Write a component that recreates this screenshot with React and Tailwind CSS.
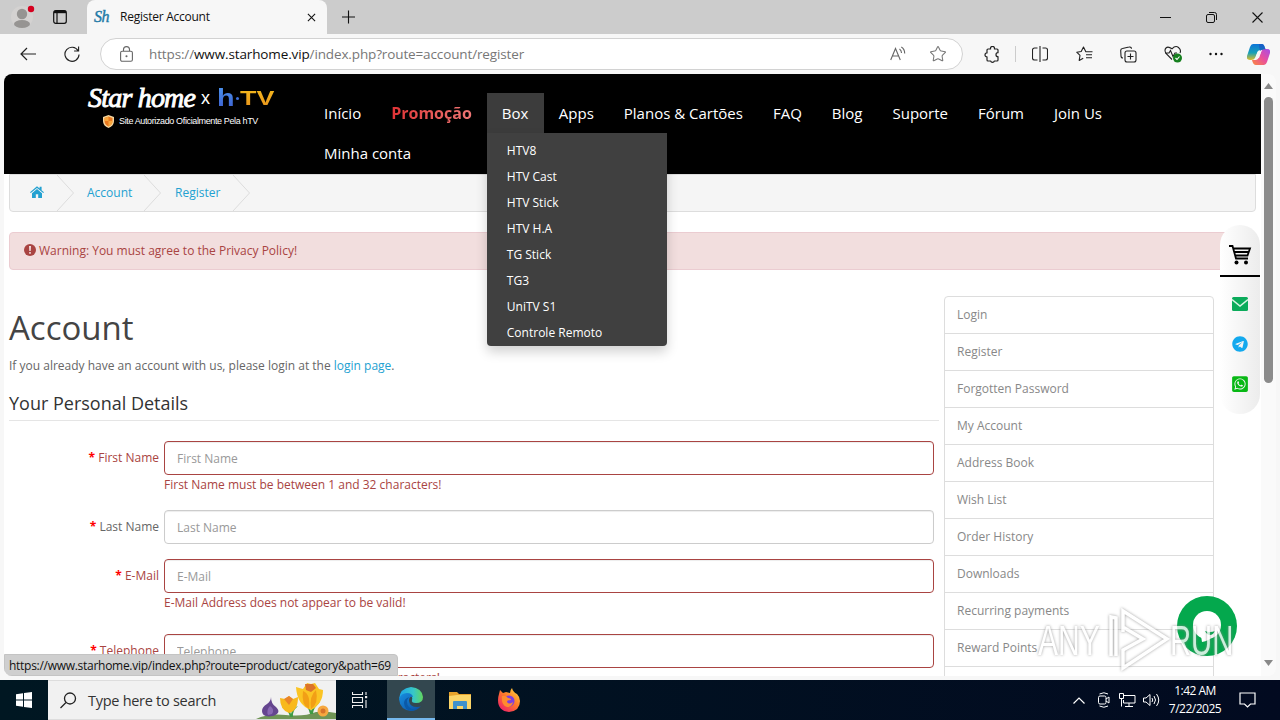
import { FaTelegram, FaWhatsappSquare } from 'react-icons/fa';
import { Star } from 'lucide-react';

const navItems = [
  { label: 'Início' },
  { label: 'Promoção', hot: true },
  { label: 'Box', open: true },
  { label: 'Apps' },
  { label: 'Planos & Cartões' },
  { label: 'FAQ' },
  { label: 'Blog' },
  { label: 'Suporte' },
  { label: 'Fórum' },
  { label: 'Join Us' },
  { label: 'Minha conta' },
];

const boxMenu = ['HTV8', 'HTV Cast', 'HTV Stick', 'HTV H.A', 'TG Stick', 'TG3', 'UniTV S1', 'Controle Remoto'];

const accountLinks = [
  'Login',
  'Register',
  'Forgotten Password',
  'My Account',
  'Address Book',
  'Wish List',
  'Order History',
  'Downloads',
  'Recurring payments',
  'Reward Points',
];

const fields = [
  { label: 'First Name', error: 'First Name must be between 1 and 32 characters!', gap: 'mb-[15px]' },
  { label: 'Last Name', gap: 'mb-[15px]' },
  { label: 'E-Mail', error: 'E-Mail Address does not appear to be valid!', gap: 'mb-[21px]' },
  { label: 'Telephone', error: 'Telephone must be between 3 and 32 characters!', gap: 'mb-0' },
];

function TitleBar() {
  return (
    <div className="flex h-[34px] shrink-0 items-center bg-[#cccccc]">
      <div className="flex w-[87px] items-center">
        <svg className="ml-[10px]" width="26" height="28" viewBox="0 0 26 28">
          <circle cx="12" cy="14" r="11" fill="#d4d2d1" />
          <circle cx="12" cy="11" r="5.2" fill="#969492" />
          <ellipse cx="12" cy="21" rx="8" ry="4" fill="#969492" />
          <circle cx="21" cy="6" r="3.2" fill="#d5001f" />
        </svg>
        <svg className="ml-[17px]" width="14" height="14" viewBox="0 0 14 14" fill="none" stroke="#111">
          <rect x="0.7" y="0.7" width="12.6" height="12.6" rx="2" strokeWidth="1.2" />
          <path d="M1 2h12" strokeWidth="2.4" />
          <path d="M4 3v10" strokeWidth="1.2" />
        </svg>
      </div>
      <div className="flex h-[34px] w-[240px] items-center rounded-t-[8px] bg-[#f7f7f7]">
        <span className="ml-[7px] w-[26px] font-['Liberation_Serif'] text-[16px] italic tracking-[-0.5px] text-[#1f7ba8] [-webkit-text-stroke:0.4px_#1f7ba8]">Sh</span>
        <span className="w-[187px] text-[12px] tracking-[-0.25px] text-[#111]">Register Account</span>
        <svg width="9" height="9" viewBox="0 0 10 10" stroke="#111" strokeWidth="1.2"><path d="M1 1l8 8M9 1l-8 8" /></svg>
      </div>
      <svg className="ml-[15px]" width="13" height="14" viewBox="0 0 14 14" stroke="#111" strokeWidth="1.2"><path d="M7 0v14M0 7h14" /></svg>
      <div className="ml-auto flex items-center">
        <svg className="mr-[35px]" width="11" height="11" viewBox="0 0 11 11"><path d="M0 5.5h11" stroke="#111" /></svg>
        <svg className="mr-[35px]" width="11" height="11" viewBox="0 0 11 11" fill="none" stroke="#111">
          <rect x="0.5" y="2.5" width="8" height="8" rx="1.5" />
          <path d="M3 .5h5.5a2 2 0 0 1 2 2V8" />
        </svg>
        <svg className="mr-[17px]" width="11" height="11" viewBox="0 0 11 11" stroke="#111" strokeWidth="1.1"><path d="M.5 .5l10 10M10.5 .5l-10 10" /></svg>
      </div>
    </div>
  );
}

function Toolbar() {
  return (
    <div className="flex h-10 shrink-0 items-center bg-[#f7f7f7]">
      <svg className="ml-5" width="16" height="14" viewBox="0 0 16 14" fill="none" stroke="#222" strokeWidth="1.2"><path d="M16 7H1M7 1L1 7l6 6" /></svg>
      <svg className="ml-7" width="16" height="17" viewBox="0 0 17 17" fill="none" stroke="#222" strokeWidth="1.2"><path d="M15 4.500A7.500 7.500 0 1 0 16 8.500M15.500 0v4.800h-4.800" /></svg>
      <div className="ml-5 flex h-8 w-[863px] items-center rounded-full border border-[#d2d2d2] bg-white">
        <svg className="ml-[19px]" width="13" height="16" viewBox="0 0 13 16" fill="none" stroke="#666" strokeWidth="1.1">
          <rect x="0.6" y="5.2" width="11.8" height="10" rx="1.5" />
          <path d="M3.500 5V3.600a3 3 0 0 1 6 0V5" />
          <circle cx="6.5" cy="10.2" r="0.5" fill="#666" />
        </svg>
        <span className="ml-4 w-[741px] text-[13.5px] tracking-[-0.13px] text-[#777]">
          https://<span className="text-[#111]">www.starhome.vip</span>/index.php?route=account/register
        </span>
        <svg width="16" height="16" viewBox="0 0 16 16" fill="none" stroke="#666" strokeWidth="1.1">
          <path d="M.7 14L5.500 2.500 10.300 14M2.400 10h6.200M9.500 3q2 1.500 2 4M11.300 1q3.400 2 3.400 6.500" />
        </svg>
        <Star className="ml-[23px]" size={18} strokeWidth={1.4} color="#777" />
      </div>
      <svg className="ml-[21px]" width="16" height="17" viewBox="0 0 16 17" fill="none" stroke="#222" strokeWidth="1.2" strokeLinejoin="round">
        <path d="M4 3h2.600a2 2 0 1 1 3.800 0h2.600a1 1 0 0 1 1 1v2.700a2 2 0 1 0 0 4V14a1 1 0 0 1-1 1h-2.600a2 2 0 0 1-3.800 0H4a1 1 0 0 1-1-1v-3.100a2 2 0 1 1 0-4V4a1 1 0 0 1 1-1z" />
      </svg>
      <div className="ml-[15px] h-4 w-px bg-[#ccc]" />
      <svg className="ml-4" width="16" height="16" viewBox="0 0 16 16" fill="none" stroke="#222" strokeWidth="1.1">
        <path d="M5.500 2H2.500a2 2 0 0 0-2 2v8a2 2 0 0 0 2 2h3M10.500 2h3a2 2 0 0 1 2 2v8a2 2 0 0 1-2 2h-3M8 0v16" />
      </svg>
      <svg className="ml-7" width="17" height="16" viewBox="0 0 17 16" fill="none" stroke="#222" strokeWidth="1.1" strokeLinejoin="round">
        <path d="M12 5.800H9.800L7.500 1 5.200 5.500.7 6.200 4 9.400l-.8 5 4-2.200M11 5.700h5.500M10 8.700h6M10 11.700h6" />
      </svg>
      <svg className="ml-[27px]" width="17" height="17" viewBox="0 0 17 17" fill="none" stroke="#222" strokeWidth="1.1">
        <path d="M3 12a2 2 0 0 1-2-2L.7 4.500a2 2 0 0 1 1.800-2L9 1a2 2 0 0 1 2.500 1.800" />
        <rect x="5" y="5" width="11" height="11" rx="2" />
        <path d="M10.500 7.500v6M7.500 10.500h6" />
      </svg>
      <svg className="ml-[27px]" width="19" height="18" viewBox="0 0 19 18" fill="none" stroke="#222" strokeWidth="1.1">
        <path d="M8 14.500L2 8.500Q0 5 2 3t6 .8Q11.500 0 14.500 2.500t1.500 5.500M1 8h4l1.500-2.500 2.500 6L11 8h2" />
        <circle cx="13.5" cy="13" r="4.5" fill="#16801f" stroke="none" />
        <path d="M11.500 13l1.500 1.500 2.500-3" stroke="#fff" />
      </svg>
      <svg className="ml-[26px]" width="14" height="4" viewBox="0 0 14 4" fill="#111"><circle cx="1.5" cy="2" r="1.2" /><circle cx="7" cy="2" r="1.2" /><circle cx="12.5" cy="2" r="1.2" /></svg>
      <svg className="ml-6" width="23" height="21" viewBox="0 0 23 21">
        <defs>
          <linearGradient id="copBlue" x2="0" y2="1"><stop stopColor="#0d74d8" /><stop offset=".55" stopColor="#17a0b8" /><stop offset="1" stopColor="#e0bd28" /></linearGradient>
          <linearGradient id="copPink" x1="1" x2="0" y2="1"><stop stopColor="#a64ce8" /><stop offset=".5" stopColor="#e94f9d" /><stop offset="1" stopColor="#fb8b3c" /></linearGradient>
        </defs>
        <path d="M6 0h9q2 0 3 4l1 2h-6q-2 0-3 3l-2 5q-1 2-4 2H3q-4 0-3-4L3 3q1-3 3-3z" fill="url(#copBlue)" />
        <path d="M17 21H9q-3 0-4-5h4q2 0 3-3l2-5q1-3 4-3h2q4 0 3 4l-3 9q-1 3-3 3z" fill="url(#copPink)" />
        <path d="M6 0h9q2 0 3 4l.5 1.500q-4-1-5.500 2Q12 3 12 0z" fill="#1b55c2" opacity=".7" />
        <path d="M11 7h3.500l-2.500 7H8.500z" fill="#f7f7f7" />
      </svg>
    </div>
  );
}

function Logo() {
  return (
    <div className="flex w-[305px] shrink-0 flex-col pl-[84px] pt-[9px] text-white">
      <div className="flex h-[30px] items-center">
        <span className="w-[113px] whitespace-nowrap font-['Liberation_Serif'] text-[28px] italic leading-[30px] tracking-[-0.8px] [-webkit-text-stroke:0.9px_#fff]">Star home</span>
        <span className="w-4 font-['Liberation_Sans'] text-[18px]">x</span>
        <span className="inline-block w-[18px] origin-left scale-x-[1.2] bg-linear-to-b from-[#4d9bf4] to-[#3d57c9] bg-clip-text font-['Liberation_Sans'] text-[24px] font-bold leading-[30px] text-transparent">h</span>
        <span className="ml-[1px] size-[3px] rounded-full bg-[#3d6fd8]" />
        <span className="ml-[1px] inline-block w-[34px] origin-left scale-x-[1.28] bg-linear-to-b from-[#f7c51e] to-[#e4871b] bg-clip-text font-['Liberation_Sans'] text-[21px] font-bold leading-[30px] text-transparent">TV</span>
      </div>
      <div className="flex h-4 items-center pl-[15px]">
        <svg width="11" height="13" viewBox="0 0 11 13">
          <path d="M5.500 0L11 2v4q0 5-5.500 7Q0 11 0 6V2z" fill="#f5d6a0" />
          <path d="M5.500 1.500l4 1.500v3q0 3.700-4 5.400-4-1.700-4-5.400V3z" fill="#e9781f" />
          <path d="M5.500 1.500L1.500 3v3h4zM5.500 6h4q0 3.700-4 5.400z" fill="#f7a63c" />
        </svg>
        <span className="ml-[5px] mt-px whitespace-nowrap font-['Liberation_Sans'] text-[9px] tracking-[-0.37px]">Site Autorizado Oficialmente Pela hTV</span>
      </div>
    </div>
  );
}

function NavItem({ item }) {
  return (
    <li className={item.open ? 'relative h-10 w-[57px] bg-[#3c3c3c]' : 'h-10'}>
      <a
        href="#"
        className={
          item.hot
            ? 'block bg-linear-to-r from-[#dd1a26] to-[#f08080] bg-clip-text px-[15px] text-[16px] font-bold leading-10 text-transparent'
            : 'block px-[15px] text-[15px] leading-10 text-white'
        }
      >
        {item.label}
      </a>
      {item.open && (
        <ul className="absolute left-0 top-10 z-20 h-[213px] w-[180px] rounded-b-[4px] bg-[#404040] pt-[5px] shadow-[0_6px_12px_rgba(0,0,0,0.18)]">
          {boxMenu.map(entry => (
            <li key={entry} className="h-[26px] pl-5 text-[12px] leading-[26px] text-white">{entry}</li>
          ))}
        </ul>
      )}
    </li>
  );
}

function Crumb() {
  return (
    <svg width="18" height="36" viewBox="0 0 18 36" fill="none" stroke="#dcdcdc" className="shrink-0"><path d="M0 0l16.500 18L0 36" /></svg>
  );
}

function Breadcrumb() {
  return (
    <ul className="mx-[5px] flex h-[38px] shrink-0 overflow-hidden rounded-b-[4px] border border-[#ddd] bg-[#f5f5f5] leading-[36px] text-[#23a1d1]">
      <li className="flex w-[47px] items-center pl-5">
        <svg className="-mt-[3px]" width="14" height="12" viewBox="0 0 14 12" fill="#23a1d1">
          <path d="M0 6.200L7 .3l2.600 2.200V.8h2v3.400L14 6.200l-.8.900L7 1.900.8 7.100z" />
          <path d="M7 3l5 4.200V12H8.200V8.300H5.800V12H2V7.200z" />
        </svg>
      </li>
      <Crumb />
      <li className="w-[69px] pl-3">Account</li>
      <Crumb />
      <li className="w-[71px] pl-[13px]">Register</li>
      <Crumb />
    </ul>
  );
}

function Field({ field }) {
  const tone = field.error ? 'text-[#a94442]' : 'text-[#666]';
  return (
    <div className={`flex ${field.gap}`}>
      <label className={`w-[155px] shrink-0 pr-[5px] pt-[7px] text-right leading-5 ${tone}`}>
        <span className="font-bold text-[#f00]">* </span>{field.label}
      </label>
      <div className="w-[770px]">
        <input
          placeholder={field.label}
          className={`block h-[34px] w-full rounded-[4px] border bg-white px-3 text-[12px] shadow-[inset_0_1px_1px_rgba(0,0,0,0.075)] placeholder:text-[#999] ${field.error ? 'border-[#a94442]' : 'border-[#ccc]'}`}
        />
        {field.error && <div className="h-5 leading-5 text-[#a94442]">{field.error}</div>}
      </div>
    </div>
  );
}

function SideDock() {
  return (
    <div className="absolute left-[1216px] top-[151px] flex h-[189px] w-10 flex-col items-center rounded-[20px] bg-linear-to-r from-white to-[#ececec]">
      <div className="flex h-[52px] w-10 shrink-0 justify-center border-b-2 border-black pt-[19px]">
        <svg width="24" height="22" viewBox="0 0 24 22" fill="none" stroke="#000" strokeWidth="1.8">
          <path d="M1 2h3.500l3.500 12.500h12M5.500 4.500H22l-2.500 7H7.500M6.500 8h14" />
          <circle cx="8.5" cy="18.500" r="2" fill="#000" stroke="none" />
          <circle cx="18" cy="18.500" r="2" fill="#000" stroke="none" />
        </svg>
      </div>
      <svg className="mt-5" width="16" height="14" viewBox="0 0 16 14">
        <rect width="16" height="14" rx="1.5" fill="#0bab5b" />
        <path d="M0 2.500l8 6.500 8-6.500" fill="none" stroke="#d8f5e4" strokeWidth="1.5" />
      </svg>
      <FaTelegram className="mt-[25px]" size={16} color="#13a9ee" />
      <FaWhatsappSquare className="mt-[23px]" size={18} color="#08b815" />
    </div>
  );
}

function Watermark() {
  return (
    <div className="absolute left-[1034px] top-[532px] flex h-[68px] w-[200px] items-center opacity-80 [filter:drop-shadow(0_0_1.5px_#888)]">
      <span className="w-[70px] origin-left scale-x-[0.7] font-['Liberation_Sans'] text-[43px] leading-[50px] text-white">ANY</span>
      <svg className="shrink-0" width="62" height="68" viewBox="0 0 62 68" fill="none">
        <path d="M8 50V12l-5-1v39M15 26V5l44 28-44 29V44l20-11-20-12" stroke="#fff" strokeWidth="3.5" />
      </svg>
      <span className="w-[64px] origin-left scale-x-[0.68] font-['Liberation_Sans'] text-[43px] leading-[50px] text-white">RUN</span>
    </div>
  );
}

function SitePage() {
  return (
    <div className="flex h-[602px] w-[1257px] shrink-0 flex-col overflow-hidden bg-white font-['Open_Sans',sans-serif] text-[12px] text-[#666]">
      <header className="flex h-[100px] shrink-0 bg-black">
        <Logo />
        <ul className="flex w-[870px] flex-wrap content-start whitespace-nowrap pt-[19px]">
          {navItems.map(item => <NavItem key={item.label} item={item} />)}
        </ul>
      </header>
      <Breadcrumb />
      <div className="mx-[5px] mt-5 flex h-[38px] shrink-0 items-center rounded-[4px] border border-[#ebccd1] bg-[#f2dede] pl-[14px] text-[#a94442]">
        <svg className="-mt-[2px] mr-[3px]" width="12" height="12" viewBox="0 0 12 12">
          <circle cx="6" cy="6" r="6" fill="#a94442" />
          <path d="M5 2h2l-.3 5H5.300zM5.200 8h1.600v1.700H5.200z" fill="#f2dede" />
        </svg>
        Warning: You must agree to the Privacy Policy!
      </div>
      <div className="ml-[5px] flex">
        <main className="w-[930px] pt-9">
          <h1 className="h-[43px] text-[33px] leading-[43px] text-[#444]">Account</h1>
          <p className="mt-[7px] h-5 leading-5">
            If you already have an account with us, please login at the <span className="text-[#23a1d1]">login page</span>.
          </p>
          <h2 className="mb-5 mt-3 h-[33px] border-b border-[#e5e5e5] text-[18px] leading-[30px] text-[#333]">Your Personal Details</h2>
          {fields.map(field => <Field key={field.label} field={field} />)}
        </main>
        <aside className="ml-[5px] mt-[26px] h-[400px] w-[270px] rounded-t-[4px] border border-[#ddd]">
          {accountLinks.map(link => (
            <a key={link} href="#" className="block h-[37px] border-b border-[#ddd] pl-3 leading-[36px] text-[#888]">{link}</a>
          ))}
        </aside>
      </div>
    </div>
  );
}

function Taskbar() {
  return (
    <div className="flex h-10 shrink-0 bg-linear-to-r from-[#001722] to-[#020a20] text-white">
      <div className="flex w-12 items-center justify-center">
        <svg width="16" height="16" viewBox="0 0 16 16" fill="#fff"><path d="M0 2.200l7-1v6.300H0zM8 1l8-1v7.500H8zM0 8.500h7v6.300l-7-1zM8 8.500h8V16l-8-1.100z" /></svg>
      </div>
      <div className="flex w-[288px] items-center border-y border-[#ddd] bg-[#f1f1f1]">
        <svg className="ml-3" width="17" height="17" viewBox="0 0 17 17" fill="none" stroke="#222" strokeWidth="1.3"><circle cx="10" cy="6.5" r="5.5" /><path d="M6 10.500L.5 16" /></svg>
        <span className="ml-[11px] mt-px w-[168px] text-[14.5px] tracking-[-0.28px] text-[#333]">Type here to search</span>
        <svg width="80" height="38" viewBox="0 0 80 38">
          <path d="M0 38Q12 32 30 34T60 31q10-1 20 1v6z" fill="#6f9556" />
          <path d="M34 36q-1-6-8-10 8 1 9 7 1-6 7-8-6 5-5 11zM54 33q-2-9-9-13 9 3 10 10 2-7 9-9-7 6-7 12z" fill="#3f9c44" />
          <path d="M15 16q0 7 5 10 6 6-3 9-11 2-11-5 0-4 5-7 4-3 4-7z" fill="#65458f" />
          <path d="M14 25q-4 4-2 9l4-1q3-5-2-8z" fill="#8968b3" />
          <path d="M24 17l5 1 4-3 4 3 5-2q0 14-9 16-9-3-9-15z" fill="#f8b91d" />
          <path d="M28 18l5-3 4 3-4 6z" fill="#e9852a" />
          <path d="M40 6l7 2 4-6 4 1 4-1 4 6 4 1q0 14-12 20Q41 24 40 6z" fill="#fbc423" />
          <path d="M47 10q8 3 6 18-8-4-6-18zM60 9q-7 6-5 19 8-5 5-19z" fill="#f29f16" />
          <path d="M49 3h8l3 4-5 4-5-2z" fill="#dc742a" />
          <circle cx="67" cy="30" r="5.5" fill="#f6a840" /><circle cx="67" cy="30" r="2.5" fill="#d7742b" />
        </svg>
      </div>
      <div className="flex w-[51px] items-center pl-4">
        <svg width="16" height="16" viewBox="0 0 16 16" fill="none" stroke="#eee" strokeWidth="1.1"><path d="M.5 0v2.500h10V0M.5 5.500h10v5H.5zM.5 16v-2.500h10V16M14 0v3M14 8v8" /><rect x="13" y="4" width="2.2" height="2.2" fill="#eee" stroke="none" /></svg>
      </div>
      <div className="flex w-12 items-center justify-center border-b-2 border-[#76b9ed] bg-[#33474f]">
        <svg width="24" height="24" viewBox="0 0 24 24">
          <defs>
            <linearGradient id="edgeTop" x2="1"><stop stopColor="#1ca3ea" /><stop offset=".6" stopColor="#37c7c8" /><stop offset="1" stopColor="#62d65c" /></linearGradient>
            <linearGradient id="edgeBody" x2="1" y2="1"><stop stopColor="#178fe0" /><stop offset="1" stopColor="#0c4ca0" /></linearGradient>
          </defs>
          <path d="M0 12Q1 1 12 0q11 1 12 10 0 6-7 6-5 0-4-3 1-3-2-5-5-3-11 4z" fill="url(#edgeTop)" />
          <path d="M0 12q2-6 8-6 5 0 6 4-4-1-4 4 1 6 8 6 3 0 4-1-4 5-10 5Q1 23 0 12z" fill="url(#edgeBody)" />
          <path d="M10 10q-4 5 0 10 3 3 7 2.500Q6 26 5 16q0-4 5-6z" fill="#0a59a8" />
        </svg>
      </div>
      <div className="flex w-[49px] items-center justify-center">
        <svg width="22" height="19" viewBox="0 0 22 19"><path d="M0 1h8l2 2h12v4H0z" fill="#e7a32b" /><path d="M0 5l8-1h14v14H0z" fill="#fbd568" /><path d="M4 18v-7q0-1 1-1h12q1 0 1 1v7h-4v-3H8v3z" fill="#3f91cb" /></svg>
      </div>
      <div className="flex w-[49px] items-center justify-center">
        <svg width="24" height="24" viewBox="0 0 24 24">
          <defs><linearGradient id="fox" x1="1" x2=".2" y2="1"><stop stopColor="#ffe23e" /><stop offset=".5" stopColor="#ff7a2a" /><stop offset="1" stopColor="#ee2068" /></linearGradient></defs>
          <path d="M2 6l1-4 3 3 3-1 4 1q0-3 2-5 1 4 5 6 3 3 3 7 0 10-11 11Q1 23 1 12q0-3 1-6z" fill="url(#fox)" />
          <circle cx="12" cy="13" r="5.5" fill="#7c3fe0" />
          <path d="M5 8q4-1 6 2 3 0 3 2-4 0-4 2 2 3 6 0-1 5-6 5-6-2-5-11z" fill="#ff8c2e" />
        </svg>
      </div>
      <div className="ml-auto flex items-center">
        <svg width="12" height="7" viewBox="0 0 12 7" fill="none" stroke="#fff" strokeWidth="1.2"><path d="M.5 6.500L6 1l5.500 5.500" /></svg>
        <svg className="ml-[13px]" width="12" height="16" viewBox="0 0 12 16" fill="none" stroke="#fff"><rect x=".5" y="4" width="7.5" height="8" rx="1.5" /><path d="M8 7l3-2v6L8 9M1.500 2Q6-.5 10 2M1.500 14q4.500 2.500 8.500 0" /></svg>
        <svg className="ml-[9px]" width="17" height="14" viewBox="0 0 17 14" fill="none" stroke="#fff"><path d="M5 2.500h11v7.500H4.500V7M10 10v3M6 13.500h8M.5.500h4v5h-4zM2.500 5.500v8" /></svg>
        <svg className="ml-[7px]" width="17" height="14" viewBox="0 0 17 14" fill="none" stroke="#fff"><path d="M.5 5h2.500L7 1.500v11L3 9H.5zM9 5q1.500 2 0 4M11 3q3 4 0 8M13.500 1q4.500 6 0 12" /></svg>
        <div className="ml-1 flex w-[62px] flex-col items-center whitespace-nowrap text-[12px] leading-[18px] tracking-[-0.5px]">
          <span>1:42 AM</span>
          <span>7/22/2025</span>
        </div>
        <svg className="ml-[13px] mr-6" width="17" height="16" viewBox="0 0 17 16" fill="none" stroke="#fff" strokeWidth="1.2"><path d="M1 1h15v11h-4.500L8.500 15l-3-3H1z" /></svg>
      </div>
    </div>
  );
}

export default function App() {
  return (
    <div className="flex h-[720px] w-[1280px] flex-col overflow-hidden bg-[#f7f7f7] font-['Open_Sans',sans-serif]">
      <TitleBar />
      <Toolbar />
      <div className="relative mx-1 mb-1 flex h-[602px] shrink-0 overflow-hidden rounded-[8px] bg-[#fafafa]">
        <SitePage />
        <div className="flex w-[15px] flex-col items-center">
          <svg className="mt-[9px]" width="9" height="6" viewBox="0 0 9 6"><path d="M4.500 0L9 6H0z" fill="#888" /></svg>
          <div className="mt-2 h-[286px] w-[9px] rounded-full bg-[#8b8b8b]" />
          <svg className="mb-[10px] mt-auto" width="9" height="6" viewBox="0 0 9 6"><path d="M4.500 6L0 0h9z" fill="#888" /></svg>
        </div>
        <SideDock />
        <svg className="absolute left-[1173px] top-[522px]" width="60" height="60" viewBox="0 0 60 60">
          <circle cx="30" cy="30" r="30" fill="#04a84d" />
          <circle cx="30" cy="29" r="14" fill="#fff" />
          <path d="M24 40l1 6q7-1 11-6z" fill="#fff" />
          <path d="M28 35q5 2 10 0-2 4-5 4t-5-4z" fill="#04a84d" />
        </svg>
        <Watermark />
        <div className="absolute bottom-0 left-0 h-[22px] w-[394px] whitespace-nowrap rounded-tr-[4px] border border-[#c4c4c4] bg-[#cfcfcf] pl-1 text-[12px] leading-[22px] tracking-[-0.28px] text-[#111]">
          https://www.starhome.vip/index.php?route=product/category&amp;path=69
        </div>
      </div>
      <Taskbar />
    </div>
  );
}
